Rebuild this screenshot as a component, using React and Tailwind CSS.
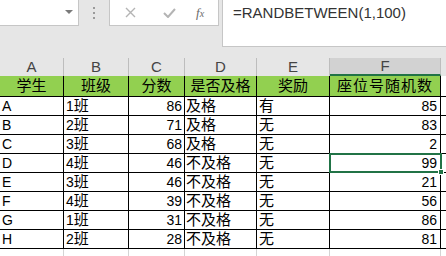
import React from 'react'

const cols = ['A', 'B', 'C', 'D', 'E', 'F']
const widths = ['w-[64px]', 'w-[65px]', 'w-[56px]', 'w-[72px]', 'w-[73px]', 'w-[111px]']

const heads = ['学生', '班级', '分数', '是否及格', '奖励', '座位号随机数']

const rows = [
  ['A', '1', 86, '及格', '有', 85],
  ['B', '2', 71, '及格', '无', 83],
  ['C', '3', 68, '及格', '无', 2],
  ['D', '4', 46, '不及格', '无', 99],
  ['E', '3', 46, '不及格', '无', 21],
  ['F', '4', 39, '不及格', '无', 56],
  ['G', '1', 31, '不及格', '无', 86],
  ['H', '2', 28, '不及格', '无', 81],
]

const font = { fontFamily: '"Liberation Sans", "Noto Sans CJK SC", sans-serif' }

function TopBar() {
  return (
    <div className="flex h-[58px] bg-[#e6e6e6]">
      <div className="flex h-[26px] w-[79px] items-center justify-end border-r border-b border-[#c6c6c6] bg-white pr-[5px]">
        <svg width="8" height="5" viewBox="0 0 8 5"><path d="M0 0h8L4 4z" fill="#7a7a7a" /></svg>
      </div>
      <div className="flex w-[30px] flex-col items-center justify-start gap-[3px] pt-[7px]">
        <span className="h-[2px] w-[2px] bg-[#9a9a9a]" />
        <span className="h-[2px] w-[2px] bg-[#9a9a9a]" />
        <span className="h-[2px] w-[2px] bg-[#9a9a9a]" />
      </div>
      <div className="flex h-[26px] w-[110px] items-center border-x border-b border-[#c6c6c6] bg-white">
        <svg className="ml-[15px]" width="11" height="11" viewBox="0 0 11 11">
          <path d="M1 1l9 9M10 1l-9 9" stroke="#b4b4b4" strokeWidth="1.4" />
        </svg>
        <svg className="ml-[27px]" width="13" height="10" viewBox="0 0 13 10">
          <path d="M1 5l4 4 7-8" stroke="#b4b4b4" strokeWidth="2" fill="none" />
        </svg>
        <span className="ml-[20px] text-[13px] italic text-[#6a6a6a]" style={{ fontFamily: '"Liberation Serif", serif' }}>
          f<span className="text-[10px]">x</span>
        </span>
      </div>
      <div className="ml-[3px] flex h-[47px] flex-1 border-l border-b border-[#c6c6c6] bg-white pl-[10px] pt-[2px] text-[15px] text-[#333]" style={font}>
        =RANDBETWEEN(1,100)
      </div>
    </div>
  )
}

function ColHeads() {
  return (
    <div className="flex h-[18px] bg-[#e6e6e6] text-[15px] text-[#444]" style={font}>
      {cols.map((c, i) => (
        <div
          key={c}
          className={`${widths[i]} flex items-center justify-center border-r border-[#bdbdbd] ${c === 'F' ? 'border-b-2 border-b-[#217346] bg-[#d2d2d2]' : ''}`}
        >
          {c}
        </div>
      ))}
      <div className="flex-1" />
    </div>
  )
}

function Table() {
  return (
    <div className="relative text-[14px] text-black" style={font}>
      <div className="flex h-[21px] bg-[#92d050] border-b border-black text-[15px]">
        {heads.map((h, i) => (
          <div key={h} className={`${widths[i]} flex items-center justify-center border-r border-black ${i === 5 ? 'tracking-[1px]' : ''}`}>{h}</div>
        ))}
        <div className="flex-1 bg-white" />
      </div>
      {rows.map((r) => (
        <div key={r[0]} className="flex h-[19px] border-b border-black bg-white">
          <div className={`${widths[0]} flex items-center border-r border-black pl-[2px]`}>{r[0]}</div>
          <div className={`${widths[1]} flex items-center border-r border-black pl-[2px]`}>
            {r[1]}<span className="text-[15px]">班</span>
          </div>
          <div className={`${widths[2]} flex items-center justify-end border-r border-black pr-[2px]`}>{r[2]}</div>
          <div className={`${widths[3]} flex items-center border-r border-black pl-[1px] text-[15px]`}>{r[3]}</div>
          <div className={`${widths[4]} flex items-center border-r border-black pl-[2px] text-[15px]`}>{r[4]}</div>
          <div className={`${widths[5]} flex items-center justify-end border-r border-black pr-[3px]`}>{r[5]}</div>
          <div className="flex-1" />
        </div>
      ))}
      <div className="flex h-[20px] bg-white">
        {widths.map((w) => (
          <div key={w} className={`${w} border-r border-[#d4d4d4]`} />
        ))}
      </div>
      {/* selected cell F, row D */}
      <div className="absolute left-[329px] top-[77px] h-[20px] w-[113px] border-2 border-[#217346]" />
      <div className="absolute left-[438px] top-[93px] h-[6px] w-[6px] border border-white bg-[#217346]" />
    </div>
  )
}

export default function App() {
  return (
    <div className="h-[256px] w-[446px] overflow-hidden bg-white">
      <TopBar />
      <ColHeads />
      <Table />
    </div>
  )
}
